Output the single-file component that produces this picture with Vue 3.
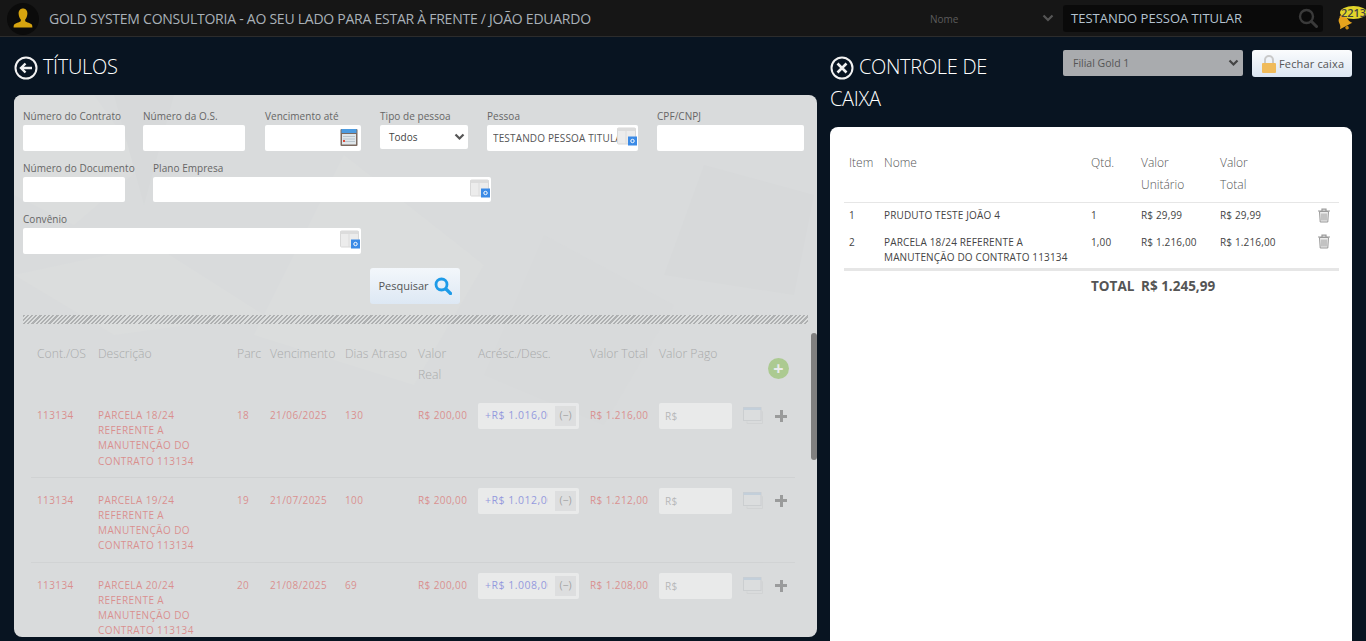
<template>
  <div class="page">
    <header class="topbar">
      <div class="avatar">
        <svg width="24" height="24" viewBox="0 0 24 24">
          <path d="M12 1.500c2.900 0 4.400 2.300 4.400 5 0 2.600-1.100 4.800-2.200 6v1.600c0 1 4.400 1.600 6.300 3.200.7.600.9 1.900.9 3.200H2.600c0-1.300.2-2.600.9-3.200 1.900-1.600 6.300-2.200 6.300-3.200v-1.600c-1.100-1.200-2.200-3.400-2.200-6 0-2.700 1.500-5 4.400-5z" fill="#d6a40f" />
        </svg>
      </div>
      <div class="brand">GOLD SYSTEM CONSULTORIA - AO SEU LADO PARA ESTAR À FRENTE / JOÃO EDUARDO</div>
      <div class="searchtype">
        <span>Nome</span>
        <svg width="12" height="8" viewBox="0 0 12 8"><path d="M1.500 1.500 6 6l4.500-4.500" fill="none" stroke="#555" stroke-width="2.200" /></svg>
      </div>
      <div class="searchbox">
        <span>TESTANDO PESSOA TITULAR</span>
        <svg width="20" height="20" viewBox="0 0 20 20"><circle cx="8.500" cy="8.500" r="6.500" fill="none" stroke="#3a3a3a" stroke-width="2.400" /><path d="m13.500 13.500 5 5" stroke="#3a3a3a" stroke-width="3" stroke-linecap="round" /></svg>
      </div>
      <div class="bell">
        <svg width="18" height="18" viewBox="0 0 18 18">
          <g transform="rotate(-28 9 9)">
            <path d="M9 1.500c1 0 1.500.6 1.600 1.500 2 .7 3 2.500 3.100 5 .1 2.700 1 4.200 2.300 5.500H2c1.300-1.300 2.200-2.800 2.300-5.500.1-2.500 1.100-4.300 3.100-5 .1-.9.600-1.500 1.600-1.500z" fill="#e7a31c" />
            <circle cx="9" cy="15.500" r="1.800" fill="#c98a12" />
          </g>
        </svg>
        <span class="badge">2213</span>
      </div>
    </header>

    <main class="content">
      <section class="left">
        <h1 class="title">
          <svg class="round" width="24" height="24" viewBox="0 0 24 24">
            <circle cx="12" cy="12" r="10.500" fill="none" stroke="#f2f2f2" stroke-width="2" />
            <path d="M18 12H7.500M11.500 7.500 7 12l4.500 4.500" fill="none" stroke="#f2f2f2" stroke-width="2.400" />
          </svg>
          TÍTULOS
        </h1>

        <div class="panel">
          <svg class="polys" width="803" height="542" viewBox="0 0 803 542">
            <path d="M80 0 130 70 60 130 0 100V0z" fill="#dbdddd" />
            <path d="M100 0h60l-30 110z" fill="#d7d9da" />
            <path d="M330 60 470 170 400 290 240 240z" fill="#dbdddd" />
            <path d="M690 70 800 100 780 200 650 180z" fill="#d7d9da" />
            <path d="M530 140 660 210 590 330 470 280z" fill="#d8dadb" />
            <path d="M0 180 140 150 250 220 100 240z" fill="#dbdddd" />
          </svg>

          <div class="form">
            <div class="row">
              <label class="field w102"><span>Número do Contrato</span><input type="text" /></label>
              <label class="field w102 g18"><span>Número da O.S.</span><input type="text" /></label>
              <label class="field w96 g20">
                <span>Vencimento até</span>
                <div class="inputwrap">
                  <input type="text" />
                  <svg class="inneric cal" width="18" height="18" viewBox="0 0 18 18">
                    <rect x=".5" y="1" width="17" height="17" rx="1" fill="#7b6a60" />
                    <rect x="1.500" y="1" width="15" height="4" fill="#4c9be0" />
                    <rect x="2" y="6" width="14" height="10.500" fill="#dfe6ea" />
                    <path d="M3 8.500h12M3 11h12M3 13.500h12" stroke="#b8c4cc" />
                    <rect x="3" y="12" width="2" height="2" fill="#e04a3a" />
                  </svg>
                </div>
              </label>
              <label class="field w88 g19">
                <span>Tipo de pessoa</span>
                <div class="selectbox">Todos
                  <svg width="11" height="8" viewBox="0 0 11 8"><path d="M1.500 1.500 5.500 5.500l4-4" fill="none" stroke="#555" stroke-width="2.200" /></svg>
                </div>
              </label>
              <label class="field w151 g19">
                <span>Pessoa</span>
                <div class="inputwrap">
                  <input type="text" value="TESTANDO PESSOA TITULAR" />
                  <svg class="inneric look" width="20" height="20" viewBox="0 0 20 20">
                    <rect x=".5" y="1" width="18" height="16" rx="1" fill="#ececec" stroke="#d8d8d8" />
                    <rect x=".5" y="1" width="18" height="3" fill="#dcdcdc" />
                    <path d="M9 4v13" stroke="#dcdcdc" />
                    <rect x="11" y="9.500" width="9" height="9" fill="#3a8ae6" />
                    <circle cx="15.500" cy="14" r="1.700" fill="none" stroke="#fff" />
                  </svg>
                </div>
              </label>
              <label class="field w147 g19"><span>CPF/CNPJ</span><input type="text" /></label>
            </div>
            <div class="row">
              <label class="field w102"><span>Número do Documento</span><input type="text" class="short" /></label>
              <label class="field w338 g28">
                <span>Plano Empresa</span>
                <div class="inputwrap">
                  <input type="text" class="short" />
                  <svg class="inneric look" width="20" height="20" viewBox="0 0 20 20">
                    <rect x=".5" y="1" width="18" height="16" rx="1" fill="#ececec" stroke="#d8d8d8" />
                    <rect x=".5" y="1" width="18" height="3" fill="#dcdcdc" />
                    <path d="M9 4v13" stroke="#dcdcdc" />
                    <rect x="11" y="9.500" width="9" height="9" fill="#3a8ae6" />
                    <circle cx="15.500" cy="14" r="1.700" fill="none" stroke="#fff" />
                  </svg>
                </div>
              </label>
            </div>
            <div class="row">
              <label class="field w338">
                <span>Convênio</span>
                <div class="inputwrap">
                  <input type="text" />
                  <svg class="inneric look" width="20" height="20" viewBox="0 0 20 20">
                    <rect x=".5" y="1" width="18" height="16" rx="1" fill="#ececec" stroke="#d8d8d8" />
                    <rect x=".5" y="1" width="18" height="3" fill="#dcdcdc" />
                    <path d="M9 4v13" stroke="#dcdcdc" />
                    <rect x="11" y="9.500" width="9" height="9" fill="#3a8ae6" />
                    <circle cx="15.500" cy="14" r="1.700" fill="none" stroke="#fff" />
                  </svg>
                </div>
              </label>
            </div>
            <div class="actions">
              <button class="btn-search" type="button">
                Pesquisar
                <svg width="18" height="18" viewBox="0 0 18 18"><circle cx="7.500" cy="7.500" r="5.500" fill="none" stroke="#1e9be8" stroke-width="2.800" /><path d="m12 12 4.500 4.500" stroke="#1e9be8" stroke-width="3.200" stroke-linecap="round" /></svg>
              </button>
            </div>
          </div>

          <div class="stripe"></div>

          <table class="titles">
            <colgroup>
              <col style="width:61px" /><col style="width:139px" /><col style="width:33px" /><col style="width:75px" />
              <col style="width:73px" /><col style="width:60px" /><col style="width:112px" /><col style="width:69px" />
              <col style="width:84px" /><col style="width:32px" /><col style="width:26px" />
            </colgroup>
            <thead>
              <tr>
                <th>Cont./OS</th><th>Descrição</th><th>Parc</th><th>Vencimento</th><th>Dias Atraso</th>
                <th>Valor<br />Real</th><th>Acrésc./Desc.</th><th>Valor Total</th><th>Valor Pago</th>
                <th colspan="2" class="addcell"><span class="add">+</span></th>
              </tr>
            </thead>
            <tbody>
              <tr v-for="t in titulos" :key="t.parc">
                <td>113134</td>
                <td class="desc">{{ t.desc }}</td>
                <td>{{ t.parc }}</td>
                <td>{{ t.venc }}</td>
                <td>{{ t.dias }}</td>
                <td>R$ 200,00</td>
                <td>
                  <div class="acresc"><span class="val">+R$ {{ t.acresc }}</span><span class="minus">(−)</span></div>
                </td>
                <td>{{ t.total }}</td>
                <td><div class="pago">R$</div></td>
                <td class="ic">
                  <svg width="20" height="17" viewBox="0 0 20 17">
                    <rect x=".5" y=".5" width="17.500" height="13" fill="#dfe1e1" stroke="#b9bdc0" />
                    <rect x=".5" y=".5" width="17.500" height="2.500" fill="#a6bfd8" />
                    <path d="M18.500 4.500h1v12H4v-2" fill="none" stroke="#c8cacb" />
                  </svg>
                </td>
                <td class="ic plus"><span></span></td>
              </tr>
            </tbody>
          </table>

          <div class="scrollthumb"></div>
        </div>
      </section>

      <section class="right">
        <div class="righthead">
          <h1 class="title ctitle">
            <svg class="round" width="24" height="24" viewBox="0 0 24 24">
              <circle cx="12" cy="12" r="10.500" fill="none" stroke="#f2f2f2" stroke-width="2" />
              <path d="m7.500 7.500 9 9m0-9-9 9" fill="none" stroke="#f2f2f2" stroke-width="2.600" />
            </svg>
            CONTROLE DE CAIXA
          </h1>
          <div class="filial">
            Filial Gold 1
            <svg width="11" height="8" viewBox="0 0 11 8"><path d="M1.500 1.500 5.500 5.500l4-4" fill="none" stroke="#444" stroke-width="2.200" /></svg>
          </div>
          <button class="btn-close" type="button">
            <svg width="16" height="18" viewBox="0 0 16 18">
              <path d="M4 8V5a4 4 0 0 1 8 0v3" fill="none" stroke="#c9c9c9" stroke-width="2" />
              <rect x="1" y="8" width="14" height="10" rx="1" fill="#f0bb5a" />
            </svg>
            Fechar caixa
          </button>
        </div>

        <div class="cart">
          <table class="items">
            <colgroup>
              <col style="width:35px" /><col style="width:207px" /><col style="width:50px" />
              <col style="width:79px" /><col style="width:92px" /><col />
            </colgroup>
            <thead>
              <tr>
                <th>Item</th><th>Nome</th><th>Qtd.</th><th>Valor<br />Unitário</th><th>Valor<br />Total</th><th></th>
              </tr>
            </thead>
            <tbody>
              <tr v-for="i in itens" :key="i.n">
                <td>{{ i.n }}</td>
                <td>{{ i.nome }}</td>
                <td>{{ i.qtd }}</td>
                <td>{{ i.unit }}</td>
                <td>{{ i.total }}</td>
                <td class="trash">
                  <svg width="14" height="15" viewBox="0 0 14 15">
                    <path d="M1 3h12M5 3V1.200h4V3" fill="none" stroke="#999" stroke-width="1.200" />
                    <path d="M2.500 3.500 3.200 14h7.600l.7-10.500z" fill="#ececec" stroke="#999" />
                    <path d="M5 5.500V12.500M7 5.500V12.500M9 5.500V12.500" stroke="#999" />
                  </svg>
                </td>
              </tr>
            </tbody>
            <tfoot>
              <tr>
                <td colspan="2"></td>
                <td class="sum">TOTAL</td>
                <td class="sum" colspan="3">R$ 1.245,99</td>
              </tr>
            </tfoot>
          </table>
        </div>
      </section>
    </main>
  </div>
</template>

<script setup>
const titulos = [
  { parc: 18, desc: 'PARCELA 18/24 REFERENTE A MANUTENÇÃO DO CONTRATO 113134', venc: '21/06/2025', dias: 130, acresc: '1.016,00', total: 'R$ 1.216,00' },
  { parc: 19, desc: 'PARCELA 19/24 REFERENTE A MANUTENÇÃO DO CONTRATO 113134', venc: '21/07/2025', dias: 100, acresc: '1.012,00', total: 'R$ 1.212,00' },
  { parc: 20, desc: 'PARCELA 20/24 REFERENTE A MANUTENÇÃO DO CONTRATO 113134', venc: '21/08/2025', dias: 69, acresc: '1.008,00', total: 'R$ 1.208,00' }
]

const itens = [
  { n: 1, nome: 'PRUDUTO TESTE JOÃO 4', qtd: '1', unit: 'R$ 29,99', total: 'R$ 29,99' },
  { n: 2, nome: 'PARCELA 18/24 REFERENTE A MANUTENÇÃO DO CONTRATO 113134', qtd: '1,00', unit: 'R$ 1.216,00', total: 'R$ 1.216,00' }
]
</script>

<style>
html, body {
  height: 100%;
  overflow: hidden;
  background: #081421;
}
</style>

<style scoped>
.page {
  height: 641px;
  overflow: hidden;
  font-family: "Open Sans", sans-serif;
  background: #081421;
  color: #555;
}

/* top bar */
.topbar {
  height: 36px;
  display: flex;
  align-items: center;
  background: #161616;
  border-bottom: 1px solid #2c2c2c;
  padding-left: 7px;
}
.avatar {
  width: 32px;
  height: 32px;
  border-radius: 50%;
  background: #0b0b0b;
  display: flex;
  align-items: center;
  justify-content: center;
  margin-top: 2px;
}
.brand {
  margin-left: 10px;
  width: 838px;
  font-size: 14px;
  letter-spacing: -0.25px;
  white-space: nowrap;
  color: #a9b1b8;
}
.searchtype {
  width: 124px;
  margin-left: 43px;
  display: flex;
  align-items: center;
  justify-content: space-between;
  padding-right: 9px;
  font-size: 10px;
  color: #5c5c5c;
}
.searchtype span { margin-top: 1px; }
.searchbox {
  width: 260px;
  height: 27px;
  background: #0a0a0a;
  border-radius: 3px;
  display: flex;
  align-items: center;
  justify-content: space-between;
  padding: 0 5px 0 8px;
  box-sizing: border-box;
  font-size: 13px;
  color: #b5c3d0;
}
.bell {
  position: relative;
  width: 30px;
  height: 30px;
  margin-left: 12px;
  padding-top: 10px;
  box-sizing: border-box;
}
.badge {
  position: absolute;
  top: 3px;
  left: 5px;
  width: 27px;
  height: 13px;
  line-height: 13px;
  border-radius: 50%;
  background: #e3d52a;
  color: #444;
  font-size: 11px;
  font-weight: 600;
  text-align: center;
}

/* columns */
.content {
  display: flex;
  height: 604px;
  padding: 0 14px;
  gap: 13px;
}
.left { width: 803px; flex: none; }
.right { flex: 1; min-width: 0; }

.title {
  margin: 0;
  font-size: 20px;
  line-height: 32px;
  letter-spacing: -0.3px;
  font-weight: 300;
  color: #fff;
}
.round {
  vertical-align: -6px;
}
.left .title { padding: 14px 0 12px; }

/* filter panel */
.panel {
  position: relative;
  height: 542px;
  border-radius: 8px;
  overflow: hidden;
  background: #d9dbdc;
}
.polys {
  position: absolute;
  inset: 0;
}
.form {
  position: relative;
  padding: 14px 9px 0;
}
.row {
  display: flex;
  align-items: flex-start;
  margin-bottom: 10px;
}
.field {
  display: block;
  flex: none;
}
.field > span {
  display: block;
  font-size: 10px;
  line-height: 14px;
  margin-bottom: 2px;
  letter-spacing: 0.05px;
  color: #666;
  white-space: nowrap;
}
.w102 { width: 102px; }
.w96 { width: 96px; }
.w88 { width: 88px; }
.w151 { width: 151px; }
.w147 { width: 147px; }
.w338 { width: 338px; }
.g18 { margin-left: 18px; }
.g19 { margin-left: 19px; }
.g20 { margin-left: 20px; }
.g28 { margin-left: 28px; }
input {
  display: block;
  width: 100%;
  height: 26px;
  border: 0;
  border-radius: 2px;
  background: #fff;
  box-sizing: border-box;
  font: 10px "Open Sans", sans-serif;
  letter-spacing: 0.15px;
  color: #555;
  padding: 0 6px;
  outline: 0;
}
input.short { height: 25px; }
.inputwrap { position: relative; }
.inneric {
  position: absolute;
  top: 3px;
  right: 3px;
}
.look { right: 1px; top: 2px; }
.selectbox {
  height: 24px;
  background: #fff;
  border-radius: 2px;
  display: flex;
  align-items: center;
  justify-content: space-between;
  padding: 0 3px 1px 9px;
  box-sizing: border-box;
  font-size: 10px;
  color: #444;
}
.actions {
  display: flex;
  padding-left: 347px;
  padding-top: 4px;
}
.btn-search {
  width: 90px;
  height: 36px;
  border: 0;
  border-radius: 3px;
  background: linear-gradient(#f3f7fb, #dde8f4);
  display: flex;
  align-items: center;
  justify-content: center;
  gap: 5px;
  padding-bottom: 2px;
  font: 11px "Open Sans", sans-serif;
  color: #555;
}
.stripe {
  position: relative;
  height: 9px;
  margin: 11px 9px 0;
  background: repeating-linear-gradient(135deg, #aeb0b1 0 1.500px, #dcdede 1.500px 3px);
}

.titles {
  position: relative;
  margin: 0 0 0 17px;
  width: 764px;
  table-layout: fixed;
  border-collapse: collapse;
  opacity: 0.42;
}
.titles th {
  text-align: left;
  vertical-align: top;
  padding: 19px 6px 8px 6px;
  font-weight: 300;
  font-size: 12.2px;
  line-height: 21px;
  color: #666;
  white-space: nowrap;
}
.titles td {
  padding: 15px 6px 8px;
  font-size: 10px;
  line-height: 15.2px;
  letter-spacing: 0.4px;
  color: #d9271e;
  vertical-align: top;
  white-space: nowrap;
  border-bottom: 1px solid #c6c8c9;
}
.titles td.desc { white-space: normal; }
.titles .addcell { padding: 34px 0 0 31px; }
.add {
  display: block;
  width: 21px;
  height: 21px;
  border-radius: 50%;
  background: #6fb52c;
  color: #fff;
  text-align: center;
  font-size: 18px;
  line-height: 20px;
  font-weight: 700;
}
.acresc {
  display: flex;
  align-items: center;
  justify-content: space-between;
  height: 26px;
  width: 101px;
  margin-top: -5px;
  padding: 3px 3px 3px 7px;
  box-sizing: border-box;
  background: #fff;
  border-radius: 2px;
  color: #3440e0;
  font-size: 10.5px;
  letter-spacing: 0.5px;
}
.val {
  width: 63px;
  overflow: hidden;
}
.minus {
  width: 21px;
  height: 20px;
  line-height: 18px;
  background: #e4e4e4;
  color: #555;
  text-align: center;
  letter-spacing: 0;
}
.pago {
  width: 73px;
  height: 26px;
  margin-top: -5px;
  padding-left: 6px;
  line-height: 26px;
  box-sizing: border-box;
  background: #fff;
  border-radius: 2px;
  color: #888;
}
.titles td.ic { padding: 14px 0 0 6px; }
.plus span {
  display: block;
  width: 12px;
  height: 12px;
  margin-top: 3px;
  background:
    linear-gradient(#444, #444) center / 12px 3px no-repeat,
    linear-gradient(#444, #444) center / 3px 12px no-repeat;
}
.scrollthumb {
  position: absolute;
  top: 238px;
  right: 0;
  width: 6px;
  height: 127px;
  border-radius: 3px;
  background: #808080;
}

/* right column */
.righthead {
  display: flex;
  align-items: flex-start;
  height: 90px;
}
.ctitle {
  width: 193px;
  padding-top: 14px;
}
.filial {
  width: 180px;
  height: 26px;
  margin-top: 13px;
  margin-left: 40px;
  padding: 0 4px 0 10px;
  box-sizing: border-box;
  background: #a9abae;
  border-radius: 2px;
  display: flex;
  align-items: center;
  justify-content: space-between;
  font-size: 10.5px;
  color: #555;
}
.btn-close {
  width: 100px;
  height: 27px;
  margin-top: 13px;
  margin-left: 9px;
  padding: 0 0 0 9px;
  border: 0;
  border-radius: 3px;
  background: linear-gradient(#fbfcfd, #dbe6f2);
  display: flex;
  align-items: center;
  gap: 2px;
  font: 11px "Open Sans", sans-serif;
  letter-spacing: 0.15px;
  color: #555;
}
.cart {
  height: 560px;
  background: #fff;
  border-radius: 8px;
  padding: 25px 13px 0 14px;
}
.items {
  width: 495px;
  table-layout: fixed;
  border-collapse: collapse;
}
.items th {
  text-align: left;
  vertical-align: top;
  padding: 0 5px 6px;
  font-weight: 300;
  font-size: 12px;
  line-height: 22px;
  color: #555;
  border-bottom: 1px solid #e6e6e6;
}
.items tbody td {
  padding: 5px 5px 8px;
  font-size: 10px;
  line-height: 15px;
  letter-spacing: 0.15px;
  color: #444;
  vertical-align: top;
}
.items tbody tr:last-child td {
  padding: 4px 5px 3px;
  border-bottom: 3px solid #e6e6e6;
}
.items tbody td.trash { padding: 5px 0 0 10px; }
.items tbody tr:last-child td.trash { padding: 3px 0 0 10px; }
.sum {
  padding: 6px 5px;
  font-size: 13.5px;
  font-weight: 700;
  color: #555;
  white-space: nowrap;
}
</style>
